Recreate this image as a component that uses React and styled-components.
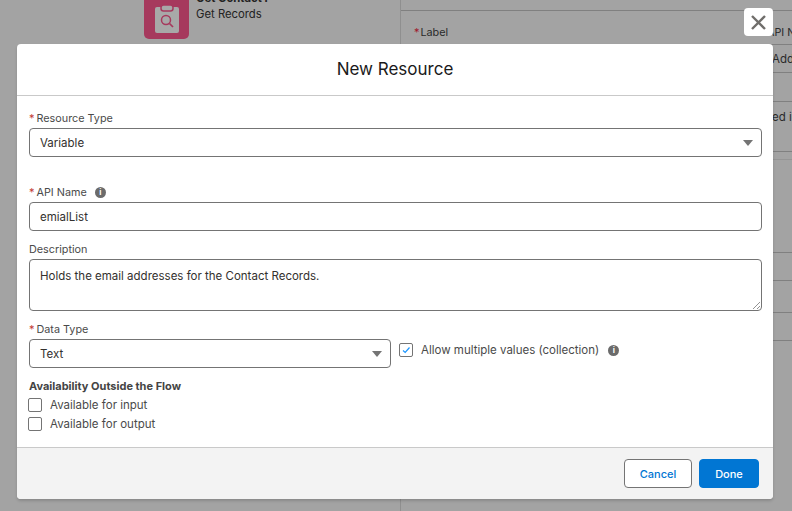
import React from 'react'
import styled, { createGlobalStyle } from 'styled-components'

const GlobalStyle = createGlobalStyle`
html, body {
  margin: 0;
  padding: 0;
  height: 100%;
  overflow: hidden;
  font-family: Inter, "Liberation Sans", Arial, sans-serif;
}
`
const Page = styled.div`
position: relative;
width: 792px;
height: 511px;
overflow: hidden;
background: #a3a3a3;
display: flex;
`
const Canvas = styled.div`
width: 401px;
display: flex;
justify-content: flex-start;
padding-left: 144px;
box-sizing: border-box;
gap: 7px;
border-right: 1px solid #8f8f8f;
flex-shrink: 0;
`
const NodeIcon = styled.div`
width: 45px;
height: 39px;
background: #a6395d;
border-radius: 0 0 5px 5px;
display: flex;
justify-content: center;
`
const NodeGlyph = styled.svg`
margin-top: 4px;
`
const NodeText = styled.div`
font-size: 11.3px;
color: #222;
line-height: 16px;
margin-top: -10px;
white-space: nowrap;
`
const NodeTitle = styled.div`
font-weight: 700;
`
const Side = styled.div`
flex: 1;
min-width: 0;
display: flex;
flex-direction: column;
`
const SideRow = styled.div`
box-sizing: border-box;
height: ${p => p.$h}px;
border-bottom: 1px solid ${p => (p.$light ? '#959595' : '#808080')};
display: flex;
align-items: ${p => p.$align || 'center'};
padding-left: 13px;
font-size: 10.8px;
color: #2a2a2a;
`
const SideLabel = styled.span`
margin-top: 15px;
`
const SideStar = styled.span`
color: #a0182c;
margin-right: 1px;
`
const SideCut = styled.span`
margin-left: auto;
margin-top: ${p => p.$top || 0}px;
width: ${p => p.$w}px;
overflow: hidden;
white-space: nowrap;
font-size: ${p => p.$size || 10.8}px;
`
const Overlay = styled.div`
position: absolute;
left: 17px;
top: 44px;
width: 756px;
height: 455px;
background: #fff;
border-radius: 4px;
box-shadow: 0 2px 3px rgba(0, 0, 0, 0.16);
display: flex;
flex-direction: column;
`
const CloseButton = styled.button`
position: absolute;
left: 744px;
top: 8px;
width: 29px;
height: 28px;
padding: 0;
border: none;
border-radius: 4px;
background: #fff;
display: flex;
align-items: center;
justify-content: center;
`
const Header = styled.div`
box-sizing: border-box;
height: 52px;
padding-bottom: 2px;
border-bottom: 1px solid #c9c9c9;
display: flex;
align-items: center;
justify-content: center;
font-size: 17px;
color: #1a1a1a;
`
const Body = styled.div`
flex: 1;
padding: 14px 11px 0 12px;
display: flex;
flex-direction: column;
`
const Label = styled.div`
display: flex;
align-items: center;
height: 16px;
font-size: 10.8px;
color: #4a4a4a;
margin-top: ${p => p.$top || 0}px;
margin-bottom: 2px;
`
const Star = styled.span`
color: #c23934;
margin-right: 2px;
font-size: 11px;
`
const InfoDot = styled.span`
width: 11px;
height: 11px;
border-radius: 50%;
background: #6b6b6b;
color: #fff;
font-size: 8px;
font-weight: 700;
line-height: 11px;
text-align: center;
margin-left: ${p => p.$left}px;
`
const Field = styled.div`
box-sizing: border-box;
width: ${p => p.$width || '100%'};
height: ${p => p.$height || 29}px;
border: 1px solid #747474;
border-radius: 4px;
background: #fff;
padding: ${p => (p.$tall ? '9px' : '0')} 8px 0 10px;
display: flex;
align-items: ${p => (p.$tall ? 'flex-start' : 'center')};
justify-content: space-between;
position: relative;
font-size: 11.5px;
color: #33302e;
flex-shrink: 0;
`
const Caret = styled.span`
width: 0;
height: 0;
border-left: 5px solid transparent;
border-right: 5px solid transparent;
border-top: 6px solid #747474;
`
const Grip = styled.svg`
position: absolute;
right: 0;
bottom: 0;
`
const TypeRow = styled.div`
display: flex;
align-items: flex-start;
`
const TypeCol = styled.div`
width: 362px;
`
const AllowRow = styled.div`
display: flex;
align-items: center;
height: 16px;
margin-top: 31px;
margin-left: 8px;
font-size: 11.5px;
color: #4a4a4a;
`
const Box = styled.span`
box-sizing: border-box;
width: 14px;
height: 14px;
border: 1px solid #747474;
border-radius: 2px;
background: #fff;
margin-right: 8px;
display: flex;
align-items: center;
justify-content: center;
flex-shrink: 0;
`
const GroupTitle = styled.div`
font-size: 11px;
line-height: 14px;
font-weight: 700;
color: #444;
margin-top: 11px;
margin-bottom: 2px;
`
const CheckRow = styled.div`
display: flex;
align-items: center;
height: 19px;
margin-left: -1px;
font-size: 11.5px;
color: #4a4a4a;
`
const Footer = styled.div`
height: 52px;
box-sizing: border-box;
border-top: 1px solid #c9c9c9;
background: #f3f3f3;
border-radius: 0 0 4px 4px;
display: flex;
align-items: center;
justify-content: flex-end;
gap: 7px;
padding-right: 14px;
`
const Button = styled.button`
box-sizing: border-box;
height: 29px;
width: ${p => p.$width}px;
border-radius: 4px;
border: 1px solid ${p => (p.$primary ? '#0176d3' : '#747474')};
background: ${p => (p.$primary ? '#0176d3' : '#fff')};
color: ${p => (p.$primary ? '#fff' : '#0176d3')};
font-family: inherit;
font-size: 11px;
font-weight: 500;
padding: 0;
`

const App = () => (
  <Page>
    <GlobalStyle />
    <Canvas>
      <NodeIcon>
        <NodeGlyph width="26" height="30" viewBox="0 0 26 30">
          <rect x="1" y="3" width="24" height="26" rx="2" fill="#a8a8a8" />
          <rect x="7" y="1" width="12" height="6" rx="2.5" fill="#a8a8a8" stroke="#a6395d" strokeWidth="1.5" />
          <circle cx="12" cy="16" r="4.5" fill="none" stroke="#a6395d" strokeWidth="1.5" />
          <path d="M15.5 19.5 L19 23" stroke="#a6395d" strokeWidth="1.7" />
        </NodeGlyph>
      </NodeIcon>
      <NodeText>
        <NodeTitle>Get Contact I</NodeTitle>
        Get Records
      </NodeText>
    </Canvas>
    <Side>
      <SideRow $h={11} />
      <SideRow $h={34} $align="flex-start">
        <SideLabel><SideStar>*</SideStar>Label</SideLabel>
        <SideCut $w={25} $top={15}>API Name</SideCut>
      </SideRow>
      <SideRow $h={28}><SideCut $w={20} $size={11.5}>Add Contact</SideCut></SideRow>
      <SideRow $h={29} />
      <SideRow $h={50} $align="flex-start">
        <SideCut $w={20} $size={11.5} $top={8}>ed in</SideCut>
      </SideRow>
      <SideRow $h={8} $light />
      <SideRow $h={93} />
      <SideRow $h={28} />
      <SideRow $h={32} />
      <SideRow $h={28} />
    </Side>
    <CloseButton>
      <svg width="17" height="17" viewBox="0 0 17 17">
        <path d="M2 2 L15 15 M15 2 L2 15" stroke="#706e6b" strokeWidth="2.4" />
      </svg>
    </CloseButton>
    <Overlay>
      <Header>New Resource</Header>
      <Body>
        <Label><Star>*</Star>Resource Type</Label>
        <Field>Variable<Caret /></Field>
        <Label $top={27}><Star>*</Star>API Name<InfoDot $left={8}>i</InfoDot></Label>
        <Field>emialList</Field>
        <Label $top={10}>Description</Label>
        <Field $height={52} $tall>
          Holds the email addresses for the Contact Records.
          <Grip width="10" height="10" viewBox="0 0 10 10">
            <path d="M2 9 L9 2 M6 9 L9 6" stroke="#777" strokeWidth="0.8" />
          </Grip>
        </Field>
        <TypeRow>
          <TypeCol>
            <Label $top={10}><Star>*</Star>Data Type</Label>
            <Field>Text<Caret /></Field>
          </TypeCol>
          <AllowRow>
            <Box>
              <svg width="10" height="10" viewBox="0 0 10 10">
                <path d="M2 5.5 L4.2 7.5 L8.5 2.5" fill="none" stroke="#1b96ff" strokeWidth="1.2" />
              </svg>
            </Box>
            Allow multiple values (collection)
            <InfoDot $left={9}>i</InfoDot>
          </AllowRow>
        </TypeRow>
        <GroupTitle>Availability Outside the Flow</GroupTitle>
        <CheckRow><Box />Available for input</CheckRow>
        <CheckRow><Box />Available for output</CheckRow>
      </Body>
      <Footer>
        <Button $width={68}>Cancel</Button>
        <Button $width={60} $primary>Done</Button>
      </Footer>
    </Overlay>
  </Page>
)

export default App
